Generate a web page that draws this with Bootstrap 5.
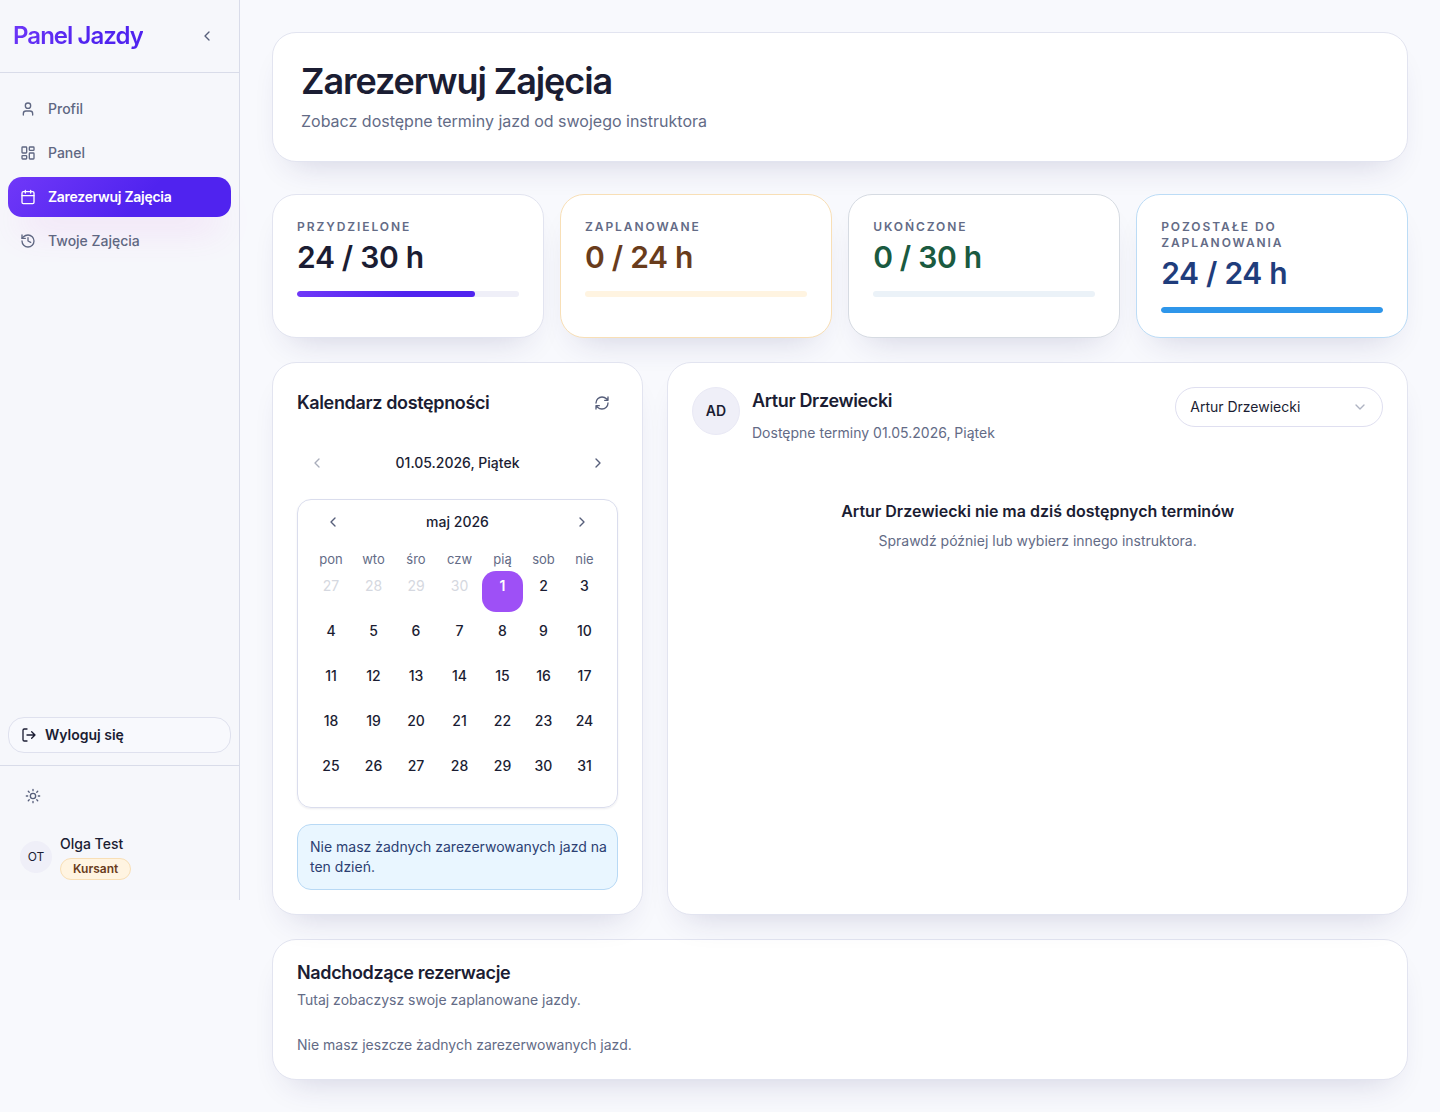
<!DOCTYPE html>
<html lang="pl">
<head>
<meta charset="utf-8">
<meta name="viewport" content="width=device-width, initial-scale=1">
<title>Panel Jazdy</title>
<link href="https://cdn.jsdelivr.net/npm/bootstrap@5.3.0/dist/css/bootstrap.min.css" rel="stylesheet">
<style>
:root{--ink:#1b1d33;--muted:#636b86;--line:#dfe1ee;--violet:linear-gradient(135deg,#7038f8 0%,#5023ef 60%)}
body{font-family:Inter,"Noto Sans",sans-serif;font-size:14px;line-height:20px;color:var(--ink);background:#f8f9fd}
svg{fill:none;stroke:currentColor;stroke-width:2;stroke-linecap:round;stroke-linejoin:round;flex:none;display:block}
h1,h2,h3,p{margin:0}
.side{width:240px;height:900px;background:#f6f7fb;border-right:1px solid #d9dce9}
.side-head{height:73px;border-bottom:1px solid #d9dce9;padding:0 16px 0 13px}
.brand{font-size:24px;line-height:32px;font-weight:600;letter-spacing:-.04em;background:var(--violet);-webkit-background-clip:text;background-clip:text;color:transparent;text-decoration:none}
.icon-btn{display:flex;align-items:center;justify-content:center;padding:0;border:0;background:none;color:#565e7a;border-radius:10px;width:32px;height:32px}
.icon-btn:disabled{opacity:.5}
.side-nav{padding:16px 8px;gap:4px}
.side-nav .nav-link{display:flex;align-items:center;gap:12px;height:40px;padding:0 12px;border-radius:14px;color:#5f6782;font-weight:500}
.side-nav .nav-link.active{background:var(--violet);color:#fff;font-weight:600;letter-spacing:-.02em;box-shadow:0 22px 36px -12px rgba(214,80,220,.2)}
.logout{height:36px;border:1px solid var(--line);border-radius:16px;background:#f8f9fd;padding:0 12px;font-weight:600;color:var(--ink)}
.side-foot{border-top:1px solid #d9dce9;padding:12px 20px 20px}
.theme-btn{width:26px;height:36px}
.user-row{margin-top:20px}
.avatar-dot{border-radius:50%;background:#efeff8;display:flex;align-items:center;justify-content:center;flex:none}
.avatar-s{width:32px;height:32px;font-size:12px}
.avatar-l{width:48px;height:48px;font-weight:600;border:1px solid #e9e9f5}
.role{font-size:12px;line-height:20px;font-weight:600;padding:0 12px;border:1px solid #f8dfb6;background:#fff4e1;color:#693c1c;border-radius:11px}
.content{padding:32px;min-width:0}
.panel{background:#fff;border:1px solid #e2e4f0;border-radius:24px;padding:24px;box-shadow:0 18px 34px -18px rgba(40,36,100,.2)}
.hero{padding:28px;margin-bottom:32px}
.hero h1{font-size:36px;line-height:40px;font-weight:600;letter-spacing:-.03em}
.hero p{font-size:16px;line-height:24px}
.soft{color:var(--muted)}
.stat-label{font-size:12px;line-height:16px;font-weight:600;letter-spacing:.16em;text-transform:uppercase;color:var(--muted)}
.stat-num{font-size:30px;line-height:36px;font-weight:600;letter-spacing:-.01em}
.meter{height:6px;border-radius:3px;background:#efeff8}
.meter .progress-bar{border-radius:3px;background:var(--violet)}
.amber{border-color:#f8dfb6}.amber .stat-num{color:#693c1c}.amber .meter{background:#fff4e1}
.green{border-color:#d6dbe2}.green .stat-num{color:#1a5a40}.green .meter{background:#ebf2f8}
.blue{border-color:#bcdcf6}.blue .stat-num{color:#1f3d7c}.blue .meter .progress-bar{background:#2e96ea}
.mid{display:grid;grid-template-columns:1fr 2fr;gap:24px}
.title{font-size:18px;line-height:28px;font-weight:600;letter-spacing:-.02em}
.day-nav .icon-btn{width:40px;height:40px}
.cal{border:1px solid #dadded;border-radius:14px;padding:8px 12px 11px;box-shadow:0 1px 2px rgba(30,30,70,.08)}
.cal-head{padding:0 9px}
.cal-head .icon-btn{width:28px;height:28px}
.month{table-layout:fixed;border-collapse:collapse;width:100%;text-align:center}
.month th{font-size:13px;line-height:20px;font-weight:400;color:var(--muted);padding:13px 0 2px}
.month td{height:45px;padding:0;vertical-align:top}
.day{display:block;width:100%;height:41px;padding:5px 0 16px;border:0;background:none;border-radius:14px;font-weight:500;line-height:20px;color:var(--ink)}
.day.out{color:#d5d8e0;font-weight:400}
.day.picked{background:#9e50f6;color:#fff;font-weight:600}
.note{border:1px solid #b8d9f5;border-radius:14px;background:#e9f6ff;color:#2c3f72;padding:12px 4px 12px 12px}
.pick{position:relative;width:208px}
.pick select{width:100%;height:40px;appearance:none;border:1px solid #dfdff0;border-radius:20px;background:#fff;color:var(--ink);padding:0 14px}
.pick svg{position:absolute;right:15px;top:12px;color:#aeb3c2;pointer-events:none}
.none{padding:56px 0 0}
.none h3{font-size:16px;line-height:24px;font-weight:600}
.title-flat{line-height:18px}
.upcoming{margin-top:25px}
</style>
<script src="https://cdn.jsdelivr.net/npm/bootstrap@5.3.0/dist/js/bootstrap.bundle.min.js"></script>
</head>
<body>
<div class="d-flex align-items-start">
<aside class="side d-flex flex-column flex-shrink-0">
  <div class="side-head d-flex align-items-center justify-content-between">
    <a class="brand" href="#">Panel Jazdy</a>
    <button class="icon-btn" type="button" aria-label="Zwiń menu"><svg width="16" height="16" viewBox="0 0 24 24"><path d="m15 18-6-6 6-6"/></svg></button>
  </div>
  <nav class="side-nav nav flex-column flex-nowrap flex-grow-1">
    <a class="nav-link" href="#"><svg width="16" height="16" viewBox="0 0 24 24"><path d="M19 21v-2a4 4 0 0 0-4-4H9a4 4 0 0 0-4 4v2"/><circle cx="12" cy="7" r="4"/></svg>Profil</a>
    <a class="nav-link" href="#"><svg width="16" height="16" viewBox="0 0 24 24"><rect x="3" y="3" width="7" height="9" rx="1"/><rect x="14" y="3" width="7" height="5" rx="1"/><rect x="14" y="12" width="7" height="9" rx="1"/><rect x="3" y="16" width="7" height="5" rx="1"/></svg>Panel</a>
    <a class="nav-link active" aria-current="page" href="#"><svg width="16" height="16" viewBox="0 0 24 24"><path d="M8 2v4M16 2v4M3 10h18"/><rect x="3" y="4" width="18" height="18" rx="2"/></svg>Zarezerwuj Zajęcia</a>
    <a class="nav-link" href="#"><svg width="16" height="16" viewBox="0 0 24 24"><path d="M3 12a9 9 0 1 0 9-9 9.75 9.75 0 0 0-6.74 2.74L3 8"/><path d="M3 3v5h5M12 7v5l4 2"/></svg>Twoje Zajęcia</a>
  </nav>
  <div class="px-2 pb-2 mb-1">
    <button class="logout w-100 d-flex align-items-center gap-2" type="button"><svg width="16" height="16" viewBox="0 0 24 24"><path d="m16 17 5-5-5-5M21 12H9M9 21H5a2 2 0 0 1-2-2V5a2 2 0 0 1 2-2h4"/></svg>Wyloguj się</button>
  </div>
  <div class="side-foot">
    <button class="icon-btn theme-btn" type="button" aria-label="Zmień motyw"><svg width="16" height="16" viewBox="0 0 24 24"><circle cx="12" cy="12" r="4"/><path d="M12 2v2M12 20v2M4.93 4.93l1.41 1.41M17.66 17.66l1.41 1.41M2 12h2M20 12h2M6.34 17.66l-1.41 1.41M19.07 4.93l-1.41 1.41"/></svg></button>
    <div class="user-row d-flex align-items-center gap-2">
      <span class="avatar-dot avatar-s">OT</span>
      <div class="d-flex flex-column align-items-start gap-1"><span class="fw-medium">Olga Test</span><span class="role">Kursant</span></div>
    </div>
  </div>
</aside>
<main class="content flex-grow-1">
  <header class="panel hero">
    <h1>Zarezerwuj Zajęcia</h1>
    <p class="soft mt-2">Zobacz dostępne terminy jazd od swojego instruktora</p>
  </header>
  <section class="row row-cols-4 gx-3 mb-4">
    <div class="col"><div class="panel h-100"><div class="stat-label">Przydzielone</div><div class="stat-num mt-1">24 / 30 h</div><div class="progress meter mt-3"><div class="progress-bar" style="width:80%"></div></div></div></div>
    <div class="col"><div class="panel amber h-100"><div class="stat-label">Zaplanowane</div><div class="stat-num mt-1">0 / 24 h</div><div class="progress meter mt-3"><div class="progress-bar" style="width:0%"></div></div></div></div>
    <div class="col"><div class="panel green h-100"><div class="stat-label">Ukończone</div><div class="stat-num mt-1">0 / 30 h</div><div class="progress meter mt-3"><div class="progress-bar" style="width:0%"></div></div></div></div>
    <div class="col"><div class="panel blue h-100"><div class="stat-label">Pozostałe do zaplanowania</div><div class="stat-num mt-1">24 / 24 h</div><div class="progress meter mt-3"><div class="progress-bar" style="width:100%"></div></div></div></div>
  </section>
  <div class="mid mb-4">
    <section class="panel">
      <div class="d-flex align-items-center justify-content-between mb-4">
        <h2 class="title">Kalendarz dostępności</h2>
        <button class="icon-btn" type="button" aria-label="Odśwież"><svg width="16" height="16" viewBox="0 0 24 24"><path d="M3 12a9 9 0 0 1 9-9 9.75 9.75 0 0 1 6.74 2.74L21 8M21 3v5h-5M21 12a9 9 0 0 1-9 9 9.75 9.75 0 0 1-6.74-2.74L3 16M8 16H3v5"/></svg></button>
      </div>
      <div class="day-nav d-flex align-items-center justify-content-between mb-3">
        <button class="icon-btn" type="button" aria-label="Poprzedni dzień" disabled><svg width="16" height="16" viewBox="0 0 24 24"><path d="m15 18-6-6 6-6"/></svg></button>
        <span class="fw-medium">01.05.2026, Piątek</span>
        <button class="icon-btn" type="button" aria-label="Następny dzień"><svg width="16" height="16" viewBox="0 0 24 24"><path d="m9 18 6-6-6-6"/></svg></button>
      </div>
      <div class="cal mb-3">
        <div class="cal-head d-flex align-items-center justify-content-between">
          <button class="icon-btn" type="button" aria-label="Poprzedni miesiąc"><svg width="16" height="16" viewBox="0 0 24 24"><path d="m15 18-6-6 6-6"/></svg></button>
          <span class="fw-medium">maj 2026</span>
          <button class="icon-btn" type="button" aria-label="Następny miesiąc"><svg width="16" height="16" viewBox="0 0 24 24"><path d="m9 18 6-6-6-6"/></svg></button>
        </div>
        <table class="month">
          <colgroup><col width="42"><col width="43"><col width="42"><col width="45"><col width="41"><col width="41"><col width="41"></colgroup>
          <thead><tr><th>pon</th><th>wto</th><th>śro</th><th>czw</th><th>pią</th><th>sob</th><th>nie</th></tr></thead>
          <tbody>
          <tr><td><button class="day out">27</button></td><td><button class="day out">28</button></td><td><button class="day out">29</button></td><td><button class="day out">30</button></td><td><button class="day picked">1</button></td><td><button class="day">2</button></td><td><button class="day">3</button></td></tr>
          <tr><td><button class="day">4</button></td><td><button class="day">5</button></td><td><button class="day">6</button></td><td><button class="day">7</button></td><td><button class="day">8</button></td><td><button class="day">9</button></td><td><button class="day">10</button></td></tr>
          <tr><td><button class="day">11</button></td><td><button class="day">12</button></td><td><button class="day">13</button></td><td><button class="day">14</button></td><td><button class="day">15</button></td><td><button class="day">16</button></td><td><button class="day">17</button></td></tr>
          <tr><td><button class="day">18</button></td><td><button class="day">19</button></td><td><button class="day">20</button></td><td><button class="day">21</button></td><td><button class="day">22</button></td><td><button class="day">23</button></td><td><button class="day">24</button></td></tr>
          <tr><td><button class="day">25</button></td><td><button class="day">26</button></td><td><button class="day">27</button></td><td><button class="day">28</button></td><td><button class="day">29</button></td><td><button class="day">30</button></td><td><button class="day">31</button></td></tr>
          </tbody>
        </table>
      </div>
      <div class="note">Nie masz żadnych zarezerwowanych jazd na ten dzień.</div>
    </section>
    <section class="panel">
      <div class="d-flex align-items-start justify-content-between">
        <div class="d-flex align-items-start">
          <span class="avatar-dot avatar-l me-2">AD</span>
          <div class="ms-1"><h2 class="title">Artur Drzewiecki</h2><p class="soft mt-2">Dostępne terminy 01.05.2026, Piątek</p></div>
        </div>
        <div class="pick">
          <select aria-label="Instruktor"><option>Artur Drzewiecki</option></select>
          <svg width="16" height="16" viewBox="0 0 24 24"><path d="m6 9 6 6 6-6"/></svg>
        </div>
      </div>
      <div class="none text-center">
        <h3>Artur Drzewiecki nie ma dziś dostępnych terminów</h3>
        <p class="soft mt-2">Sprawdź później lub wybierz innego instruktora.</p>
      </div>
    </section>
  </div>
  <section class="panel">
    <h2 class="title title-flat">Nadchodzące rezerwacje</h2>
    <p class="soft mt-2">Tutaj zobaczysz swoje zaplanowane jazdy.</p>
    <p class="soft upcoming">Nie masz jeszcze żadnych zarezerwowanych jazd.</p>
  </section>
</main>
</div>
</body>
</html>
